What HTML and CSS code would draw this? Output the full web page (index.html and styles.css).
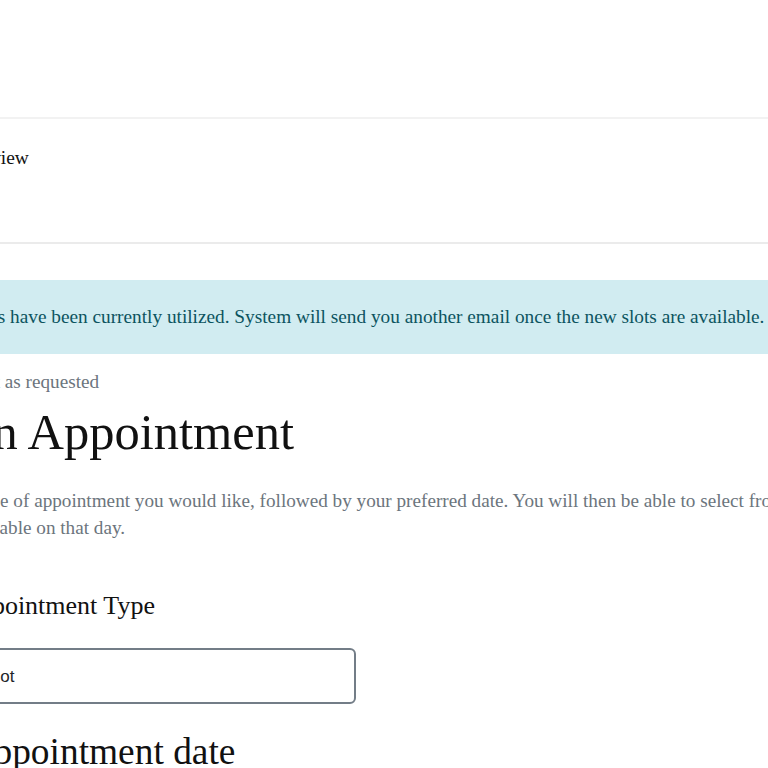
FILE: index.html
```html
<!DOCTYPE html>
<html lang="en">
<head>
  <meta charset="UTF-8">
  <title>Book an Appointment</title>
  <link rel="stylesheet" href="styles.css">
</head>
<body>

  <header class="topbar"></header>

  <!-- Main navigation -->
  <nav class="menu">
    <div class="wrap menu-items">
      <a href="#">Home</a>
      <a href="#">Overview</a>
    </div>
  </nav>

  <main class="wrap content">
    <div class="alert-info">All available slots have been currently utilized. System will send you another email once the new slots are available.</div>

    <small class="note">Confirmation resent as requested</small>

    <h1>Book an Appointment</h1>
    <p class="intro">Please select the type of appointment you would like, followed by your preferred date. You will then be able to select from the list of slots available on that day.</p>

    <h3>Choose an Appointment Type</h3>
    <select class="field">
      <option>Please select a slot</option>
    </select>

    <h2>Choose Appointment date</h2>
  </main>

</body>
</html>
```

FILE: styles.css
```css
html, body {
  overflow: hidden;
}

body {
  margin: 0;
  font-family: "Liberation Serif", "Times New Roman", serif;
  color: #212529;
  background: #ffffff;
}

.wrap {
  margin-left: -154px;
  width: 948px;
}

.topbar {
  height: 117px;
  border-bottom: 2px solid #f2f2f2;
}

.menu {
  height: 98px;
  padding-top: 25px;
  border-bottom: 2px solid #ebebeb;
}

.menu-items {
  display: flex;
  gap: 40px;
  padding-left: 19px;
  box-sizing: border-box;
}

.menu-items a {
  font-size: 19.4px;
  line-height: 27px;
  color: #111111;
  text-decoration: none;
}

.content {
  display: flex;
  flex-direction: column;
  align-items: flex-start;
}

.alert-info {
  margin-top: 36px;
  width: 1000px;
  box-sizing: border-box;
  padding: 23px 24px 23px 20px;
  background: #d1ecf1;
  color: #0c5460;
  font-size: 19.3px;
  line-height: 28px;
  white-space: nowrap;
}

.note {
  margin-top: 14px;
  font-size: 19.2px;
  line-height: 27px;
  color: #6c757d;
}

h1 {
  margin: 7px 0 0;
  padding-left: 2px;
  font-size: 50.5px;
  line-height: 60px;
  font-weight: normal;
  color: #111111;
}

.intro {
  margin: 25px 0 0 -1px;
  font-size: 19.2px;
  line-height: 27px;
  color: #6c757d;
}

h3 {
  margin: 49px 0 0;
  font-size: 26px;
  line-height: 31px;
  font-weight: normal;
  color: #111111;
}

.field {
  margin-top: 27px;
  width: 510px;
  height: 56px;
  padding: 0 20px;
  border: 2px solid #737d87;
  border-radius: 6px;
  background: #ffffff;
  font-family: "Liberation Sans", Arial, sans-serif;
  font-size: 17px;
  color: #212529;
  appearance: none;
  outline: none;
}

h2 {
  margin: 25px 0 0;
  padding-left: 1px;
  font-size: 37.4px;
  line-height: 46px;
  font-weight: normal;
  color: #111111;
}
```
